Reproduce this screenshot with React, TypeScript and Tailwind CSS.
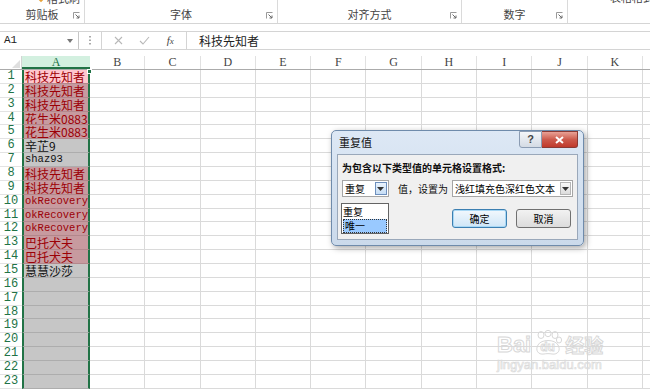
import React from "react";

const cjk = "font-['Noto_Sans_CJK_SC',sans-serif]";
const mono = "font-['Liberation_Mono','Noto_Sans_CJK_SC',monospace]";

type Cell = { v: string; dup: boolean };

const cells: Cell[] = [
  { v: "科技先知者", dup: true },
  { v: "科技先知者", dup: true },
  { v: "科技先知者", dup: true },
  { v: "花生米0883", dup: true },
  { v: "花生米0883", dup: true },
  { v: "辛芷9", dup: false },
  { v: "shaz93", dup: false },
  { v: "科技先知者", dup: true },
  { v: "科技先知者", dup: true },
  { v: "okRecovery", dup: true },
  { v: "okRecovery", dup: true },
  { v: "okRecovery", dup: true },
  { v: "巴托犬夫", dup: true },
  { v: "巴托犬夫", dup: true },
  { v: "慧慧沙莎", dup: false },
];

const cols = ["B", "C", "D", "E", "F", "G", "H", "I", "J", "K"];

function Launcher() {
  return (
    <svg width="7" height="7" viewBox="0 0 7 7" className="shrink-0">
      <path d="M0.5 6.5V0.5H6.5" fill="none" stroke="#9a9a9a" />
      <path d="M2.5 2.5L6 6M6 3.5V6H3.5" fill="none" stroke="#6a6a6a" />
    </svg>
  );
}

function Arrow() {
  return (
    <svg width="7" height="4" viewBox="0 0 7 4">
      <path d="M0 0H7L3.5 4Z" fill="#333" />
    </svg>
  );
}

function Group({ w, label, children }: { w: string; label: string; children?: React.ReactNode }) {
  return (
    <div className={`${w} h-full shrink-0 border-r border-[#dadada] relative flex items-end justify-center pb-[2px]`}>
      {children}
      <span className={`${cjk} text-[11px] leading-[14px] text-[#444]`}>{label}</span>
      <div className="absolute right-[4px] bottom-[4px]">
        <Launcher />
      </div>
    </div>
  );
}

export default function App() {
  return (
    <div className="w-[650px] h-[390px] overflow-hidden bg-white relative">
      {/* ribbon */}
      <div className="h-[24px] flex border-b border-[#d5d5d5]">
        <Group w="w-[85px]" label="剪贴板">
          <div className="absolute left-[38px] top-[-10px] flex items-center gap-[3px] whitespace-nowrap">
            <span className="w-[6px] h-[6px] rotate-45 bg-[#e8a33b]" />
            <span className={`${cjk} text-[11px] text-[#444]`}>格式刷</span>
          </div>
        </Group>
        <Group w="w-[193px]" label="字体" />
        <Group w="w-[184px]" label="对齐方式" />
        <Group w="w-[106px]" label="数字" />
        <div className="flex-1 relative">
          <span className={`${cjk} absolute left-[42px] top-[-11px] whitespace-nowrap text-[11px] text-[#444]`}>表格格式</span>
        </div>
      </div>

      {/* formula bar */}
      <div className="mt-[7px] h-[19px] flex items-stretch border-y border-[#d4d4d4]">
        <div className="w-[79px] border-r border-[#c6c6c6] flex items-center justify-between pl-[4px] pr-[5px]">
          <span className="font-['Liberation_Mono',monospace] text-[11px] text-[#222]">A1</span>
          <svg width="6" height="4" viewBox="0 0 6 4">
            <path d="M0 0H6L3 4Z" fill="#777" />
          </svg>
        </div>
        <div className="w-[22px] flex items-center justify-center bg-white">
          <svg width="2" height="9" viewBox="0 0 2 9">
            <rect x="0" y="0" width="2" height="1.5" fill="#aaa" />
            <rect x="0" y="3.5" width="2" height="1.5" fill="#aaa" />
            <rect x="0" y="7" width="2" height="1.5" fill="#aaa" />
          </svg>
        </div>
        <div className="w-[86px] border-x border-[#d4d4d4] flex items-center justify-around px-[4px]">
          <svg width="9" height="9" viewBox="0 0 9 9">
            <path d="M1 1L8 8M8 1L1 8" stroke="#b8b8b8" strokeWidth="1.1" />
          </svg>
          <svg width="11" height="9" viewBox="0 0 11 9">
            <path d="M1 5L4 8L10 1" fill="none" stroke="#b8b8b8" strokeWidth="1.1" />
          </svg>
          <span className="font-['Liberation_Serif',serif] italic text-[11px] text-[#444]">
            f<span className="text-[9px]">x</span>
          </span>
        </div>
        <div className="flex-1 flex items-center pl-[12px]">
          <span className={`${cjk} text-[12px] text-[#222]`}>科技先知者</span>
        </div>
      </div>

      {/* sheet */}
      <div className="mt-[6px]">
        <div className="h-[14px] flex border-b border-[#ababab] font-['Liberation_Serif',serif] text-[12px] leading-[13px]">
          <div className="w-[22px] shrink-0 border-r border-[#d4d4d4] relative">
            <span className="absolute right-[1px] bottom-[1px] w-0 h-0 border-l-[8px] border-l-transparent border-b-[8px] border-b-[#dfdfdf]" />
          </div>
          <div className="w-[68px] shrink-0 bg-[#d3f0e0] text-[#217346] text-center border-b-2 border-[#217346]">A</div>
          {cols.map((c) => (
            <div key={c} className="w-[55.3px] shrink-0 text-center text-[#444] border-r border-[#e1e1e1]">
              {c}
            </div>
          ))}
          <div className="flex-1" />
        </div>

        <div className="relative">
          {Array.from({ length: 23 }).map((_, i) => {
            const c = cells[i];
            const active = i === 0;
            const bg = active ? "bg-[#ffc7ce]" : c && c.dup ? "bg-[#c79a9f]" : "bg-[#c6c6c6]";
            const line = c && c.dup ? "border-[#b3878c]" : "border-[#adadad]";
            const isLatin = c && /^[a-z0-9]+$/i.test(c.v);
            return (
              <div key={i} className="h-[13.86px] flex">
                <div className="w-[22px] shrink-0 border-b border-[#e3e3e3] font-['Liberation_Mono',monospace] text-[12px] leading-[13px] text-[#217346] text-center">
                  {i + 1}
                </div>
                <div
                  className={`w-[68px] shrink-0 border-x-2 border-x-[#217346] border-b ${line} ${bg} pl-[1px] overflow-hidden whitespace-nowrap leading-[13px] ${
                    c && c.dup ? "text-[#9c0006]" : "text-[#111]"
                  } ${isLatin ? `${mono} text-[10.5px]` : `${cjk} text-[12px]`}`}
                >
                  {c ? c.v : ""}
                </div>
                {cols.map((k) => (
                  <div key={k} className="w-[55.3px] shrink-0 border-r border-b border-[#dadada]" />
                ))}
                <div className="flex-1 border-b border-[#dadada]" />
              </div>
            );
          })}
          <span className="absolute left-[87px] top-[-1px] w-[5px] h-[5px] bg-[#217346] border border-white" />
        </div>
      </div>

      {/* watermark */}
      <div className="absolute left-[497px] top-[330px] flex flex-col items-start pointer-events-none">
        <div className="flex items-end">
          <span className="font-['Liberation_Sans',sans-serif] font-bold text-[22px] leading-[22px] text-transparent [-webkit-text-stroke:1px_#d8d8d8]">
            Bai
          </span>
          <div className="relative w-[32px] h-[26px] mx-[1px]">
            <svg width="32" height="26" viewBox="0 0 32 26" className="absolute inset-0">
              <g fill="none" stroke="#d8d8d8" strokeWidth="1">
                <ellipse cx="9" cy="5" rx="3" ry="3.5" />
                <ellipse cx="16" cy="3.5" rx="3" ry="3.2" />
                <ellipse cx="23" cy="5" rx="3" ry="3.5" />
                <ellipse cx="27" cy="10" rx="2.6" ry="3" />
                <path d="M6 15C9 9 23 9 26 15C29 20 26 25 20 24C18 23.5 14 23.5 12 24C6 25 3 20 6 15Z" />
              </g>
            </svg>
            <span className="absolute left-[8px] top-[11px] font-['Liberation_Sans',sans-serif] font-bold text-[12px] leading-[12px] text-transparent [-webkit-text-stroke:0.8px_#d8d8d8]">
              du
            </span>
          </div>
          <span className={`${cjk} font-bold text-[19px] leading-[22px] text-transparent [-webkit-text-stroke:1px_#d8d8d8]`}>经验</span>
        </div>
        <span className="mt-[2px] font-['Liberation_Sans',sans-serif] text-[13px] leading-[13px] text-transparent [-webkit-text-stroke:0.7px_#dadada]">
          jingyan.baidu.com
        </span>
      </div>

      {/* dialog */}
      <div className="absolute left-[331px] top-[130px] w-[253px] h-[116px] rounded-[5px] border border-[#6f8bab] bg-gradient-to-b from-[#dde8f5] to-[#cbdaeb] shadow-[2px_2px_6px_rgba(0,0,0,0.35)] flex flex-col px-[5px] pb-[5px]">
        <div className="h-[23px] flex items-center justify-between pl-[2px]">
          <span className={`${cjk} text-[11px] text-[#111]`}>重复值</span>
          <div className="flex self-start">
            <div className="w-[23px] h-[17px] rounded-bl-[3px] border border-[#8b9cb3] bg-gradient-to-b from-[#f4f6f9] to-[#d4dbe4] flex items-center justify-center font-['Liberation_Sans',sans-serif] font-bold text-[11px] text-[#444]">
              ?
            </div>
            <div className="w-[36px] h-[17px] rounded-br-[3px] border border-l-0 border-[#8a3a34] bg-gradient-to-b from-[#e8a196] via-[#cc5a4c] to-[#c0392b] flex items-center justify-center">
              <svg width="9" height="8" viewBox="0 0 9 8">
                <path d="M1 1L8 7M8 1L1 7" stroke="#fff" strokeWidth="2" />
              </svg>
            </div>
          </div>
        </div>
        <div className={`${cjk} flex-1 border border-[#9aa8ba] bg-[#f0f0f0] px-[4px] pt-[6px] relative whitespace-nowrap`}>
          <div className="text-[10px] leading-[14px] font-bold text-[#111]">为包含以下类型值的单元格设置格式:</div>
          <div className="mt-[5px] flex items-center">
            <div className="w-[48px] h-[17px] border border-[#a5a5a5] bg-white flex items-center justify-between pl-[2px]">
              <span className="text-[10px] leading-[14px]">重复</span>
              <div className="w-[12px] h-[13px] mr-[1px] border border-[#6d8fbd] bg-gradient-to-b from-[#eaf3fc] to-[#c6ddf5] flex items-center justify-center">
                <Arrow />
              </div>
            </div>
            <span className="ml-[9px] text-[10px] leading-[14px] text-[#111]">值，设置为</span>
            <div className="ml-[4px] w-[124px] h-[17px] border border-[#a5a5a5] bg-white flex items-center justify-between pl-[2px]">
              <span className="text-[10px] leading-[14px]">浅红填充色深红色文本</span>
              <div className="w-[11px] h-[13px] mr-[1px] border border-[#b5b5b5] bg-gradient-to-b from-[#f7f7f7] to-[#dcdcdc] flex items-center justify-center">
                <Arrow />
              </div>
            </div>
          </div>
          <div className="flex justify-end gap-[9px] mt-[12px] pr-[2px]">
            <div className="w-[55px] h-[19px] rounded-[3px] border border-[#3c7fb1] bg-gradient-to-b from-[#f2f8fd] to-[#cfe6f7] shadow-[inset_0_0_0_1px_#a8d8f5] flex items-center justify-center text-[10px]">
              确定
            </div>
            <div className="w-[55px] h-[19px] rounded-[3px] border border-[#707070] bg-gradient-to-b from-[#f2f2f2] to-[#dcdcdc] flex items-center justify-center text-[10px]">
              取消
            </div>
          </div>
          <div className="absolute left-[3px] top-[48px] w-[48px] h-[31px] border border-[#646464] bg-white flex flex-col">
            <div className="h-[15px] pl-[1px] text-[10px] leading-[15px]">重复</div>
            <div className="h-[14px] pl-[1px] mx-[1px] text-[10px] leading-[12px] bg-[#99c9ff] border border-dotted border-[#333]">唯一</div>
          </div>
        </div>
      </div>
    </div>
  );
}
